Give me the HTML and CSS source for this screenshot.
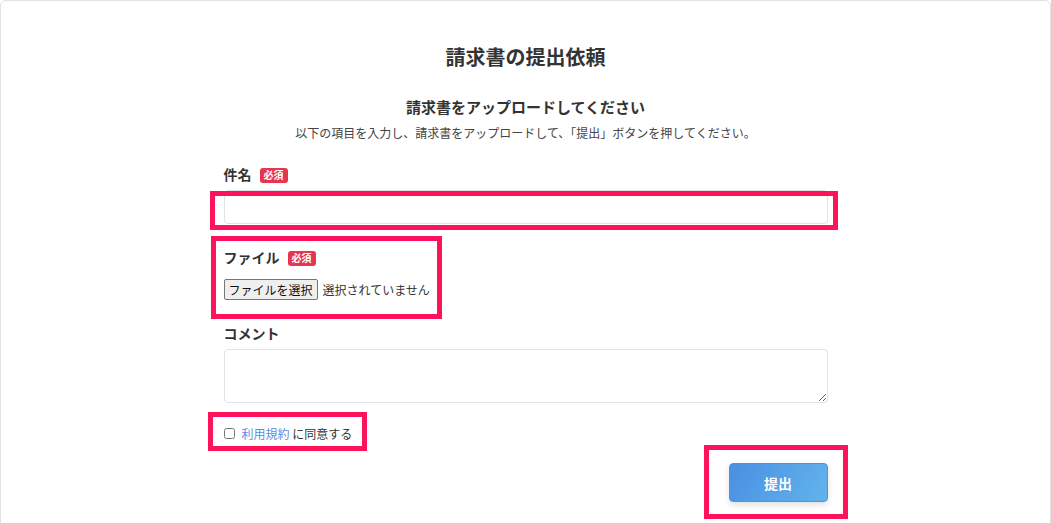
FILE: index.html
```html
<!DOCTYPE html>
<html lang="ja">
<head>
<meta charset="utf-8">
<title>請求書の提出依頼</title>
<link rel="stylesheet" href="styles.css">
</head>
<body>
<div class="card">
  <h1 class="title">請求書の提出依頼</h1>
  <form class="form">
    <h2 class="subtitle">請求書をアップロードしてください</h2>
    <p class="desc">以下の項目を入力し、請求書をアップロードして、「提出」ボタンを押してください。</p>

    <div class="field field-subject">
      <label class="label">件名 <span class="badge">必須</span></label>
      <div class="hl-wrap input-wrap">
        <input class="text-input" type="text">
        <div class="hl hl-input"></div>
      </div>
    </div>

    <div class="field field-file hl-wrap">
      <label class="label">ファイル <span class="badge">必須</span></label>
      <div class="file-row">
        <label class="file-btn">ファイルを選択<input class="file-hidden" type="file"></label>
        <span class="file-name">選択されていません</span>
      </div>
      <div class="hl hl-file"></div>
    </div>

    <div class="field field-comment">
      <label class="label">コメント</label>
      <textarea class="textarea"></textarea>
    </div>

    <div class="terms hl-wrap">
      <input class="check" type="checkbox">
      <span class="terms-text"><a class="link" href="#">利用規約</a> に同意する</span>
      <div class="hl hl-terms"></div>
    </div>

    <div class="actions">
      <div class="hl-wrap">
        <button class="submit" type="button">提出</button>
        <div class="hl hl-submit"></div>
      </div>
    </div>
  </form>
</div>
</body>
</html>
```
FILE: styles.css
```css
* { box-sizing: border-box; }
html, body { margin: 0; padding: 0; background: #fff; }
body {
  font-family: "Noto Sans CJK JP", "Noto Sans", sans-serif;
  color: #333;
}
.card {
  border: 1px solid #e2e2e2;
  border-radius: 6px;
  min-height: 560px;
  background: #fff;
}
.title {
  margin: 42px 0 0;
  font-size: 20px;
  line-height: 28px;
  font-weight: 700;
  text-align: center;
  color: #333;
}
.form {
  width: 604px;
  margin: 0 auto;
}
.subtitle {
  margin: 25px 0 0;
  font-size: 15px;
  line-height: 22px;
  font-weight: 700;
  text-align: center;
  color: #333;
}
.desc {
  margin: 6px 0 0;
  font-size: 12px;
  line-height: 18px;
  text-align: center;
  color: #444;
}
.field { margin-top: 22px; }
.field-file { margin-top: 23px; }
.field-comment { margin-top: 23px; }
.label {
  display: flex;
  align-items: center;
  gap: 8px;
  font-size: 14px;
  line-height: 20px;
  font-weight: 700;
  color: #333;
}
.badge {
  display: inline-flex;
  align-items: center;
  justify-content: center;
  width: 28px;
  height: 15px;
  border-radius: 3px;
  background: #e5354f;
  color: #fff;
  font-size: 10px;
  font-weight: 700;
  line-height: 1;
  margin-top: 2px;
}
.hl-wrap { position: relative; }
.input-wrap { margin-top: 6px; }
.text-input {
  display: block;
  width: 100%;
  height: 34px;
  margin: 0;
  border: 1px solid #dde3e7;
  border-radius: 4px;
  background: #fff;
  font: inherit;
}
.file-row {
  display: flex;
  align-items: center;
  gap: 5px;
  margin-top: 12px;
  height: 21px;
}
.file-btn {
  display: inline-flex;
  align-items: center;
  height: 21px;
  padding: 0 4px;
  border: 1px solid #767676;
  border-radius: 2px;
  background: #efefef;
  color: #111;
  font-size: 12px;
  line-height: 1;
}
.file-hidden { display: none; }
.file-name {
  font-size: 12px;
  color: #333;
}
.textarea {
  display: block;
  width: 100%;
  height: 54px;
  margin-top: 6px;
  border: 1px solid #dde3e7;
  border-radius: 4px;
  resize: vertical;
  font: inherit;
}
.terms {
  display: flex;
  align-items: center;
  gap: 7px;
  margin-top: 20px;
  height: 20px;
  font-size: 12px;
  color: #333;
}
.check {
  width: 11px;
  height: 11px;
  margin: 0;
}
.link {
  color: #5a8de0;
  text-decoration: none;
}
.actions {
  display: flex;
  justify-content: flex-end;
  margin-top: 20px;
}
.submit {
  display: block;
  width: 99px;
  height: 39px;
  border: 1px solid #4f93e0;
  border-radius: 4px;
  background: linear-gradient(120deg, #4a8fe2 0%, #62b4ec 100%);
  color: #fff;
  font-family: inherit;
  font-size: 14px;
  font-weight: 700;
  box-shadow: 0 3px 6px rgba(0, 0, 0, 0.12);
}
.hl {
  position: absolute;
  border: 5px solid #fe1259;
  pointer-events: none;
}
.hl-input { top: 1px; left: -14px; width: 628px; height: 39px; }
.hl-file { top: -11px; left: -13px; width: 231px; height: 83px; }
.hl-terms { top: -11px; left: -16px; width: 159px; height: 39px; }
.hl-submit { top: -18px; left: -25px; width: 144px; height: 74px; }
```
